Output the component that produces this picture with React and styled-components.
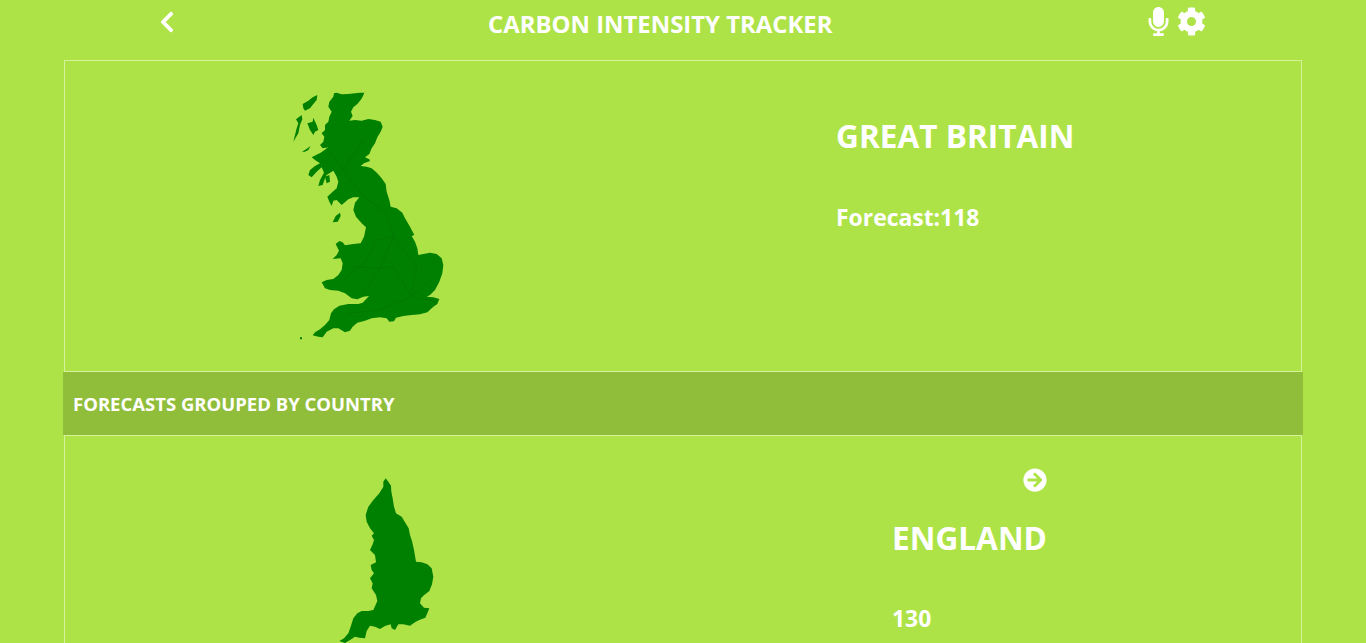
import React from "react";
import styled, { createGlobalStyle } from "styled-components";
import { FaChevronLeft, FaMicrophone, FaCog, FaArrowCircleRight } from "react-icons/fa";

const GlobalStyle = createGlobalStyle`
  html, body {
    margin: 0;
    height: 100%;
    overflow: hidden;
    background: #aee348;
    font-family: "Open Sans", "Noto Sans", sans-serif;
    color: #fff;
  }
`;

const Page = styled.div`
  height: 643px;
  overflow: hidden;
`;

const Header = styled.header`
  display: grid;
  grid-template-columns: 488px 345px 1fr;
  height: 60px;
`;

const BackCell = styled.div`
  padding: 10px 0 0 155px;
  font-size: 24px;
  line-height: 1;
`;

const Title = styled.h1`
  margin: 0;
  padding-top: 8px;
  font-size: 23.9px;
  line-height: 32px;
  font-weight: 700;
  white-space: nowrap;
`;

const Tools = styled.div`
  display: flex;
  gap: 4px;
  padding: 7px 0 0 311px;
`;

const Content = styled.main`
  margin: 0 64px;
`;

const Card = styled.section`
  display: grid;
  grid-template-columns: ${(p) => p.$textAt}px 1fr;
  height: 312px;
  box-sizing: border-box;
  border: 1px solid #d6f29b;
`;

const MapCell = styled.div`
  padding: ${(p) => p.$top}px 0 0 ${(p) => p.$left}px;

  svg {
    display: block;
  }
`;

const Info = styled.div`
  display: flex;
  flex-direction: column;
  align-items: flex-start;
`;

const RegionName = styled.h2`
  margin: 0;
  font-size: 31.6px;
  line-height: 42px;
  font-weight: 700;
`;

const Forecast = styled.p`
  margin: 0;
  font-size: 22.9px;
  line-height: 30px;
  font-weight: 700;
`;

const Band = styled.h3`
  margin: 0 -1px;
  height: 63px;
  box-sizing: border-box;
  padding: 1px 0 0 10px;
  background: #91be3a;
  font-size: 18.5px;
  line-height: 62px;
  font-weight: 700;
  white-space: nowrap;
`;

const CountryBlock = styled.div`
  display: inline-flex;
  flex-direction: column;
  align-items: flex-end;
`;

const ArrowRow = styled.div`
  height: 24px;
  margin-bottom: 25px;
  font-size: 24px;
  line-height: 1;
`;

const CountryName = styled(RegionName)`
  margin-bottom: 45px;
`;

const GreatBritainInfo = styled(Info)`
  padding-top: 54px;

  ${Forecast} {
    margin-top: 46px;
  }
`;

const EnglandInfo = styled(Info)`
  padding-top: 32px;
`;

const britain =
  "M192 40L200 38L215 43L235 42L255 40L270 38L283 38L278 50L272 60L262 72L250 82L243 95L248 108L238 122L255 120L275 122L295 117L315 120L332 125L338 140L332 155L322 172L315 190L305 205L298 222L285 232L298 238L300 243L282 250L272 258L290 260L305 265L322 280L335 295L347 312L350 335L358 360L362 380L380 385L397 398L405 415L420 440L433 465L425 468L435 485L442 505L445 525L460 522L480 518L500 522L515 535L520 555L517 580L508 605L495 630L480 645L470 650L490 652L508 657L502 672L490 680L472 697L450 703L425 705L400 708L378 713L372 724L358 725L350 715L330 712L305 715L285 722L262 728L248 740L240 752L225 757L205 745L190 745L170 755L158 772L145 770L128 766L135 757L150 748L165 735L178 720L183 700L192 688L208 677L235 672L265 672L278 668L297 648L280 650L262 658L245 655L225 640L205 632L180 630L165 625L155 607L170 600L190 597L205 585L215 570L218 550L212 535L188 537L200 525L207 512L197 492L208 483L218 487L225 496L250 492L272 490L282 470L288 442L275 430L258 410L250 390L255 368L268 352L250 352L235 358L215 375L200 360L190 362L185 378L178 365L172 350L188 335L200 325L205 305L200 290L190 272L170 285L165 295L158 315L145 318L150 300L162 278L155 262L140 275L125 292L115 285L120 270L135 258L150 250L135 240L125 232L138 225L152 218L175 202L158 205L150 195L160 185L163 170L155 160L165 150L165 135L175 125L178 110L185 95L175 80L178 65L190 50Z";

const britainIslands = [
  "M98 72L115 62L128 52L142 45L140 60L130 72L120 85L105 92L100 85Z",
  "M78 118L95 105L97 118L90 135L85 160L70 185L75 165L80 145L85 130Z",
  "M112 130L128 125L130 113L140 135L145 150L135 155L130 165L120 150Z",
  "M96 215L108 208L122 198L115 210L105 215Z",
  "M165 290L178 285L180 305L170 310Z",
  "M188 427L197 408L210 398L212 408L203 425Z",
  "M90 772L96 772L96 778L90 778Z",
];

const roads = [
  "M425 650L370 560L330 565L280 640",
  "M425 650L480 600M425 650L330 690L230 700",
  "M425 650L440 560L370 470",
  "M330 565L370 470L350 400L280 350",
  "M370 470L320 480L290 540L220 600",
  "M280 350L220 270L160 190M220 270L280 180",
  "M425 650L500 665M330 565L250 560",
];

const england =
  "M197 40L205 50L213 62L214 80L218 100L222 125L228 145L245 155L255 172L266 190L270 210L276 228L282 255L288 290L305 292L322 298L335 310L340 335L336 358L328 378L310 392L303 400L300 415L312 428L328 430L322 445L316 458L298 465L285 472L270 482L250 478L235 478L225 495L215 490L212 478L195 483L180 492L165 485L150 482L140 498L135 520L118 518L105 515L90 525L75 534L58 528L72 520L85 505L92 485L100 460L112 445L125 438L145 438L160 435L172 408L168 390L155 370L158 355L150 340L162 325L155 315L152 300L168 292L165 270L150 255L158 238L162 225L155 212L162 205L150 190L140 170L137 150L145 125L160 105L178 85L190 65L190 50Z";

function GreatBritainMap() {
  return (
    <svg width="190" height="270" viewBox="0 0 570 810" aria-label="Map of Great Britain">
      <path d={britain} fill="#008000" />
      {britainIslands.map((d) => (
        <path key={d} d={d} fill="#008000" />
      ))}
      {roads.map((d) => (
        <path key={d} d={d} fill="none" stroke="#006f00" strokeWidth="1.5" />
      ))}
    </svg>
  );
}

function EnglandMap() {
  return (
    <svg width="130" height="178" viewBox="0 0 390 534" aria-label="Map of England">
      <path d={england} fill="#008000" />
    </svg>
  );
}

export default function App() {
  return (
    <>
      <GlobalStyle />
      <Page>
        <Header>
          <BackCell>
            <FaChevronLeft />
          </BackCell>
          <Title>CARBON INTENSITY TRACKER</Title>
          <Tools>
            <FaMicrophone size={29} />
            <FaCog size={29} />
          </Tools>
        </Header>
        <Content>
          <Card $textAt={771}>
            <MapCell $top={19} $left={205}>
              <GreatBritainMap />
            </MapCell>
            <GreatBritainInfo>
              <RegionName>GREAT BRITAIN</RegionName>
              <Forecast>Forecast:118</Forecast>
            </GreatBritainInfo>
          </Card>
          <Band>FORECASTS GROUPED BY COUNTRY</Band>
          <Card $textAt={827}>
            <MapCell $top={29} $left={255}>
              <EnglandMap />
            </MapCell>
            <EnglandInfo>
              <CountryBlock>
                <ArrowRow>
                  <FaArrowCircleRight />
                </ArrowRow>
                <CountryName>ENGLAND</CountryName>
              </CountryBlock>
              <Forecast>130</Forecast>
            </EnglandInfo>
          </Card>
        </Content>
      </Page>
    </>
  );
}
